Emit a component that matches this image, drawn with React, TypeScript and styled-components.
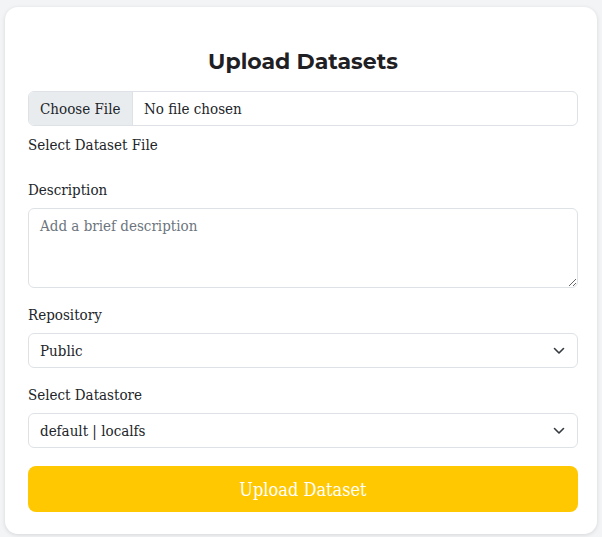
import React from "react";
import styled, { createGlobalStyle } from "styled-components";

const Global = createGlobalStyle`
  html, body { margin: 0; padding: 0; background: #f3f4f6; }
  body { width: 602px; height: 537px; overflow: hidden; }
  * { box-sizing: border-box; }
`;

const body = `"DejaVu Serif Condensed", "DejaVu Serif", serif`;

const Page = styled.div`
  padding: 7px 5px 4px 5px;
  height: 537px;
`;

const Card = styled.form`
  background: #ffffff;
  border-radius: 13px;
  box-shadow: 0 1px 4px rgba(0, 0, 0, 0.12);
  padding: 40px 19px 22px 23px;
  display: flex;
  flex-direction: column;
  font-family: ${body};
  color: #212529;
  font-size: 15px;
`;

const Title = styled.h2`
  margin: 0 0 14px 0;
  text-align: center;
  font-family: "Montserrat", Inter, "Open Sans", sans-serif;
  font-weight: 700;
  font-size: 22px;
  line-height: 30px;
  color: #1f2023;
`;

const FileBox = styled.label`
  display: flex;
  height: 35px;
  border: 1px solid #dee2e6;
  border-radius: 6px;
  overflow: hidden;
  background: #fff;
`;

const FileButton = styled.span`
  display: flex;
  align-items: center;
  padding: 0 11px;
  background: #e9ecef;
  border-right: 1px solid #dee2e6;
  width: 104px;
`;

const FileName = styled.span`
  display: flex;
  align-items: center;
  padding: 0 11px;
`;

const Label = styled.div<{ $top?: number }>`
  margin-top: ${(p) => p.$top ?? 0}px;
  margin-bottom: 6px;
  line-height: 24px;
  height: 24px;
`;

const TextArea = styled.textarea`
  display: block;
  width: 100%;
  height: 80px;
  border: 1px solid #dee2e6;
  border-radius: 6px;
  padding: 8px 11px;
  font-family: ${body};
  font-size: 15px;
  color: #212529;
  resize: vertical;
  &::placeholder { color: #6c757d; }
`;

const SelectWrap = styled.div`
  position: relative;
  height: 35px;
`;

const Select = styled.select`
  appearance: none;
  width: 100%;
  height: 35px;
  border: 1px solid #dee2e6;
  border-radius: 6px;
  background: #fff;
  padding: 0 36px 0 11px;
  font-family: ${body};
  font-size: 15px;
  color: #212529;
`;

const Chevron = styled.svg`
  position: absolute;
  right: 13px;
  top: 13px;
  pointer-events: none;
`;

const Submit = styled.button`
  margin-top: 18px;
  height: 46px;
  border: none;
  border-radius: 8px;
  background: #ffc800;
  color: #ffffff;
  font-family: ${body};
  font-size: 18px;
`;

const Arrow = () => (
  <Chevron width="12" height="9" viewBox="0 0 12 9">
    <path d="M1.5 2.5 L6 7 L10.5 2.5" fill="none" stroke="#343a40" strokeWidth="1.6" strokeLinecap="round" strokeLinejoin="round" />
  </Chevron>
);

export default function App() {
  return (
    <>
      <Global />
      <Page>
        <Card onSubmit={(e) => e.preventDefault()}>
          <Title>Upload Datasets</Title>
          <FileBox>
            <FileButton>Choose File</FileButton>
            <FileName>No file chosen</FileName>
          </FileBox>
          <Label $top={7}>Select Dataset File</Label>
          <Label $top={15}>Description</Label>
          <TextArea placeholder="Add a brief description" />
          <Label $top={15}>Repository</Label>
          <SelectWrap>
            <Select defaultValue="public">
              <option value="public">Public</option>
              <option value="private">Private</option>
            </Select>
            <Arrow />
          </SelectWrap>
          <Label $top={15}>Select Datastore</Label>
          <SelectWrap>
            <Select defaultValue="default">
              <option value="default">default | localfs</option>
            </Select>
            <Arrow />
          </SelectWrap>
          <Submit type="submit">Upload Dataset</Submit>
        </Card>
      </Page>
    </>
  );
}
